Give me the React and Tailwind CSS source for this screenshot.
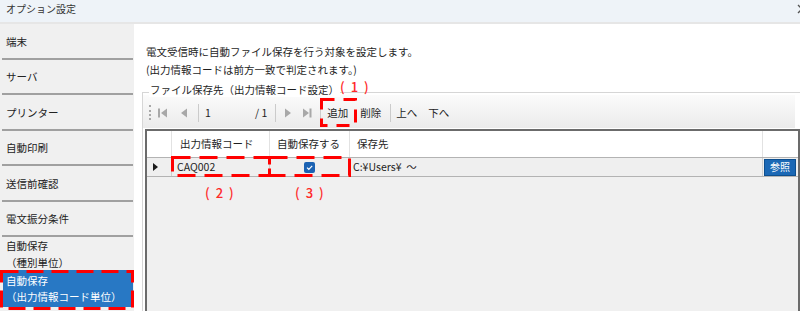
const sideItems = ["端末", "サーバ", "プリンター", "自動印刷", "送信前確認", "電文振分条件"];

const Tri = ({ dir, bar }) => (
  <svg width="9" height="10" viewBox="0 0 9 10" className="shrink-0">
    {dir === "left" ? (
      <>
        {bar && <rect x="0" y="0.5" width="2" height="9" fill="#a8a8a8" />}
        <polygon points={bar ? "9,0.5 3,5 9,9.5" : "7,0.5 1,5 7,9.5"} fill="#a8a8a8" />
      </>
    ) : (
      <>
        <polygon points="0,0.5 6,5 0,9.5" fill="#a8a8a8" />
        {bar && <rect x="6.5" y="0.5" width="2" height="9" fill="#a8a8a8" />}
      </>
    )}
  </svg>
);

const Sep = ({ className }) => <div className={"w-px h-[18px] bg-[#cbcbcb] " + className} />;

function Sidebar() {
  return (
    <div className="w-[134px] shrink-0 flex flex-col bg-[#f0f0f0] text-[#222]">
      {sideItems.map((t) => (
        <div key={t}>
          <div className="h-[33.5px] flex items-center px-[6px] pt-[2px] leading-[14px]">{t}</div>
          <div className="ml-[2px] mr-[1px] h-[2px] bg-[#a0a0a0]" />
        </div>
      ))}
      <div className="h-[33px] flex flex-col justify-center px-[6px] leading-[17px]">
        <span>自動保存</span>
        <span>（種別単位）</span>
      </div>
      <div className="h-[37px] ml-[3px] mr-[1px] bg-[#2878c4] text-white flex flex-col justify-center px-[3px] leading-[16px]">
        <span>自動保存</span>
        <span>（出力情報コード単位）</span>
      </div>
    </div>
  );
}

function Toolbar() {
  return (
    <div className="mt-[2px] mr-[5px] h-[33px] pt-[2px] flex items-center bg-linear-to-b from-[#fbfbfb] to-[#ebebeb]">
      <div className="ml-[6px] h-[15px] border-l-2 border-dotted border-[#a8a8a8]" />
      <div className="ml-[7px]"><Tri dir="left" bar /></div>
      <div className="ml-[13px] w-[7px] overflow-hidden"><Tri dir="left" /></div>
      <Sep className="ml-[11px]" />
      <span className="ml-[6px] w-[50px]">1</span>
      <span className="whitespace-pre">/ 1</span>
      <Sep className="ml-[8px]" />
      <div className="ml-[9px] w-[6px] overflow-hidden"><Tri dir="right" /></div>
      <div className="ml-[12px]"><Tri dir="right" bar /></div>
      <Sep className="ml-[8px]" />
      <span className="ml-[6px]">追加</span>
      <span className="ml-[12px]">削除</span>
      <Sep className="ml-[9px]" />
      <span className="ml-[5px]">上へ</span>
      <span className="ml-[11px]">下へ</span>
    </div>
  );
}

function Grid() {
  return (
    <div className="mt-[1px] ml-[2px] flex-1 flex flex-col border-l-2 border-t-2 border-r-2 border-[#6b6b6b] bg-[#f0f0f0]">
      <div className="h-[27px] flex bg-white border-b border-[#b3b3b3]">
        <div className="w-[25px] border-r border-[#e2e2e2]" />
        <div className="w-[98px] pl-[8px] flex items-center border-r border-[#e2e2e2]">出力情報コード</div>
        <div className="w-[80px] pl-[7px] flex items-center border-r border-[#e2e2e2]">自動保存する</div>
        <div className="w-[413px] pl-[7px] flex items-center border-r border-[#e2e2e2]">保存先</div>
        <div className="flex-1" />
      </div>
      <div className="h-[19px] flex bg-[#efefef] border-b border-[#b3b3b3]">
        <div className="w-[25px] pl-[6px] flex items-center border-r border-[#cfcfcf]">
          <svg width="5" height="8" viewBox="0 0 5 8">
            <polygon points="0,0 5,4 0,8" fill="#1a1a1a" />
          </svg>
        </div>
        <div className="w-[98px] pl-[5px] flex items-center border-r border-[#cfcfcf]">CAQ002</div>
        <div className="w-[80px] flex items-center justify-center border-r border-[#cfcfcf]">
          <svg width="11" height="11" viewBox="0 0 11 11">
            <rect x="0" y="0" width="11" height="11" rx="2" fill="#1b62b3" />
            <path d="M3 5.6 L4.8 7.3 L8.2 3.8" fill="none" stroke="#fff" strokeWidth="1.2" />
          </svg>
        </div>
        <div className="w-[413px] pl-[3px] flex items-center border-r border-[#cfcfcf] whitespace-pre">C:¥Users¥  〜</div>
        <div className="flex-1 flex items-center pl-[1px]">
          <div className="w-[32px] h-[17px] bg-[#1b68b5] border border-[#0d4f8f] text-white text-[10px] flex items-center justify-center leading-none">
            参照
          </div>
        </div>
      </div>
    </div>
  );
}

export default function App() {
  return (
    <div className="relative w-[800px] h-[311px] overflow-hidden flex flex-col bg-[#f0f0f0] text-[10.5px] font-['Noto_Sans_CJK_JP',sans-serif]">
      <div className="h-[24px] shrink-0 flex items-start pt-[2px] px-[6px] bg-[#eef3f8] border-b-2 border-[#e6e6e6] text-[10px] text-[#333] leading-[13px]">
        <span>オプション設定</span>
        <svg width="10" height="10" viewBox="0 0 10 10" className="ml-auto -mr-[13px] mt-[2px]">
          <path d="M1 1 L9 9 M9 1 L1 9" stroke="#555" strokeWidth="1.3" />
        </svg>
      </div>
      <div className="flex-1 flex min-h-0">
        <Sidebar />
        <div className="flex-1 bg-white flex flex-col text-[#1e1e1e]">
          <div className="pt-[19px] pl-[12px] leading-[18px]">
            <p>電文受信時に自動ファイル保存を行う対象を設定します。</p>
            <p>(出力情報コードは前方一致で判定されます。)</p>
          </div>
          <div className="relative mt-[13px] ml-[8px] flex-1 flex flex-col border-t border-l border-[#d6d6d6]">
            <span className="absolute -top-[10px] left-[6px] px-[1px] bg-white leading-[14px]">
              ファイル保存先（出力情報コード設定）
            </span>
            <Toolbar />
            <Grid />
          </div>
        </div>
      </div>

      <svg className="absolute inset-0 pointer-events-none" width="800" height="311" viewBox="0 0 800 311">
        <g fill="none" stroke="#ff0000" strokeWidth="3">
          <rect x="321.5" y="99.5" width="34" height="26" strokeDasharray="13 9" />
          <rect x="172.5" y="157.5" width="97" height="18" strokeDasharray="18 9" />
          <rect x="269.5" y="157.5" width="80" height="18" strokeDasharray="18 9" />
          <rect x="1.5" y="271.5" width="131" height="37" strokeDasharray="17 8" />
        </g>
      </svg>
      <span className="absolute left-[340px] top-[79px] text-[13px] leading-[16px] tracking-[6px] font-medium text-[#ff2a2a]">(1)</span>
      <span className="absolute left-[205px] top-[185px] text-[13px] leading-[16px] tracking-[6px] font-medium text-[#ff2a2a]">(2)</span>
      <span className="absolute left-[295px] top-[185px] text-[13px] leading-[16px] tracking-[6px] font-medium text-[#ff2a2a]">(3)</span>
    </div>
  );
}
